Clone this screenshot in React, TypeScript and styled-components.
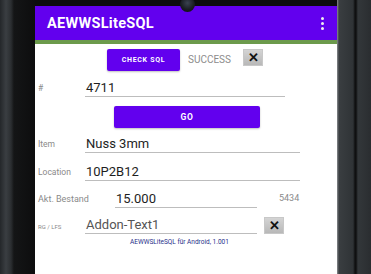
import styled, { createGlobalStyle } from "styled-components";

const GlobalStyle = createGlobalStyle`
  html, body {
    margin: 0;
    padding: 0;
    background: #111;
    overflow: hidden;
  }
`;

const Phone = styled.div`
  display: flex;
  width: 371px;
  height: 274px;
  font-family: Roboto, "Liberation Sans", sans-serif;
`;

const LeftBezel = styled.div`
  width: 35px;
  background: linear-gradient(
    90deg,
    #24272a 0px,
    #3a3e42 6px,
    #2b2e31 11px,
    #141516 14px,
    #0d0d0e 35px
  );
`;

const RightBezel = styled.div`
  width: 34px;
  background: linear-gradient(
    90deg,
    #8a8d90 0px,
    #3a3e41 2px,
    #2f3336 16px,
    #0f1011 18px,
    #0f1011 19px,
    #33373a 21px,
    #2a2d30 34px
  );
`;

const Screen = styled.div`
  position: relative;
  display: flex;
  flex-direction: column;
  width: 302px;
  background: #fff;
`;

const TopBezel = styled.div`
  height: 6px;
  background: #0c0c0d;
`;

const Camera = styled.div`
  position: absolute;
  left: 145px;
  top: -3px;
  width: 15px;
  height: 15px;
  border-radius: 50%;
  background: radial-gradient(circle at 50% 40%, #3a4250 0, #1a1d22 55%, #0a0a0a 100%);
`;

const AppBar = styled.div`
  display: flex;
  align-items: center;
  justify-content: space-between;
  height: 34px;
  padding: 0 12px;
  background: #6200ee;
  color: #fff;
`;

const Title = styled.div`
  font-size: 14.5px;
  font-weight: 700;
  letter-spacing: 0.3px;
`;

const Dots = styled.div`
  display: flex;
  flex-direction: column;
  gap: 2px;
  margin-right: 1px;
  span {
    width: 3px;
    height: 3px;
    border-radius: 50%;
    background: #eee;
  }
`;

const Strip = styled.div`
  height: 4px;
  background: #6c9a4c;
`;

const Content = styled.div`
  display: flex;
  flex-direction: column;
  padding: 5px 0 0 3px;
`;

const CheckRow = styled.div`
  display: flex;
  align-items: flex-start;
  padding-left: 69px;
  height: 27px;
`;

const PurpleButton = styled.button<{ $width: number; $size: number }>`
  width: ${(p) => p.$width}px;
  height: 22px;
  border: none;
  border-radius: 2px;
  background: #6200ee;
  color: #fff;
  font-family: Roboto, "Liberation Sans", sans-serif;
  font-size: ${(p) => p.$size}px;
  font-weight: 700;
  letter-spacing: 0.7px;
  padding: 0;
  box-shadow: 0 1px 2px rgba(0, 0, 0, 0.25);
`;

const Status = styled.span`
  margin: 5px 0 0 8px;
  font-size: 10px;
  color: #8c8c8c;
`;

const ClearButton = styled.div<{ $ml: number; $mt: number }>`
  display: flex;
  align-items: center;
  justify-content: center;
  align-self: flex-start;
  width: 20px;
  height: 17px;
  margin: ${(p) => p.$mt}px 0 0 ${(p) => p.$ml}px;
  background: linear-gradient(180deg, #d4d4d4, #b8b8b8);
  border: 1px solid #c8c8c8;
  box-sizing: border-box;
  font-size: 13px;
  font-weight: 700;
  color: #111;
`;

const FieldRow = styled.div<{ $h: number }>`
  display: flex;
  align-items: flex-end;
  height: ${(p) => p.$h}px;
`;

const Label = styled.span<{ $w: number; $size: number }>`
  width: ${(p) => p.$w}px;
  flex-shrink: 0;
  padding-bottom: 4px;
  font-size: ${(p) => p.$size}px;
  color: #8a8a8a;
`;

const Field = styled.div<{ $w: number; $muted?: boolean }>`
  width: ${(p) => p.$w}px;
  padding: 0 0 1px 1px;
  border-bottom: 1.5px solid #bdbdbd;
  font-size: 13px;
  color: ${(p) => (p.$muted ? "#555" : "#1e1e1e")};
  line-height: 15px;
`;

const Aside = styled.span`
  margin-left: 22px;
  padding-bottom: 5px;
  font-size: 9px;
  color: #8a8a8a;
`;

const GoRow = styled.div`
  display: flex;
  padding: 9px 0 0 76px;
`;

const Footer = styled.div`
  padding: 4px 0 0 92px;
  font-size: 6.5px;
  color: #1f2f8a;
`;

export default function App() {
  return (
    <>
      <GlobalStyle />
      <Phone>
        <LeftBezel />
        <Screen>
          <TopBezel />
          <Camera />
          <AppBar>
            <Title>AEWWSLiteSQL</Title>
            <Dots>
              <span />
              <span />
              <span />
            </Dots>
          </AppBar>
          <Strip />
          <Content>
            <CheckRow>
              <PurpleButton $width={73} $size={7}>CHECK SQL</PurpleButton>
              <Status>SUCCESS</Status>
              <ClearButton $ml={12} $mt={0}>✕</ClearButton>
            </CheckRow>
            <FieldRow $h={21}>
              <Label $w={47} $size={8.5}>#</Label>
              <Field $w={199}>4711</Field>
            </FieldRow>
            <GoRow>
              <PurpleButton $width={146} $size={8.5}>GO</PurpleButton>
            </GoRow>
            <FieldRow $h={25}>
              <Label $w={47} $size={8.5}>Item</Label>
              <Field $w={214}>Nuss 3mm</Field>
            </FieldRow>
            <FieldRow $h={28}>
              <Label $w={47} $size={8.5}>Location</Label>
              <Field $w={214}>10P2B12</Field>
            </FieldRow>
            <FieldRow $h={27}>
              <Label $w={77} $size={9}>Akt. Bestand</Label>
              <Field $w={141}>15.000</Field>
              <Aside>5434</Aside>
            </FieldRow>
            <FieldRow $h={26}>
              <Label $w={47} $size={6}>RG / LFS</Label>
              <Field $w={171} $muted>Addon-Text1</Field>
              <ClearButton $ml={7} $mt={9}>✕</ClearButton>
            </FieldRow>
            <Footer>AEWWSLiteSQL für Android, 1.001</Footer>
          </Content>
        </Screen>
        <RightBezel />
      </Phone>
    </>
  );
}
